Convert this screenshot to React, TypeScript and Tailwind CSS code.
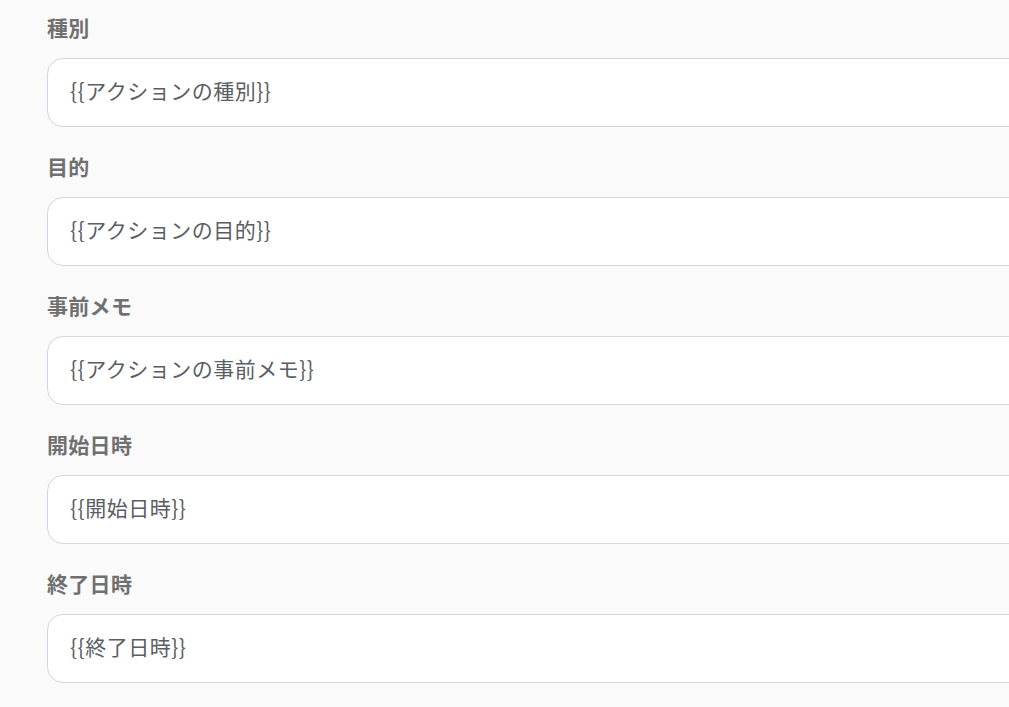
import React from "react";

const fields = [
  { label: "種別", value: "{{アクションの種別}}" },
  { label: "目的", value: "{{アクションの目的}}" },
  { label: "事前メモ", value: "{{アクションの事前メモ}}" },
  { label: "開始日時", value: "{{開始日時}}" },
  { label: "終了日時", value: "{{終了日時}}" },
];

export default function App() {
  return (
    <div
      className="h-[707px] w-full overflow-hidden bg-[#fafafa]"
      style={{ fontFamily: '"Noto Sans CJK JP", "Noto Sans", sans-serif' }}
    >
      <div className="flex flex-col gap-[25px] pl-[47px] pt-[13px]">
        {fields.map((f) => (
          <div key={f.label} className="flex flex-col gap-[17px]">
            <div className="h-[28px] text-[21px] font-bold leading-[28px] tracking-[0.3px] text-[#707070]">
              {f.label}
            </div>
            <div className="flex h-[69px] w-[1100px] items-center rounded-[16px] border border-[#d3d6de] bg-white pb-[3px] pl-[22px] text-[21px] tracking-[0.5px] text-[#5a5e64]">
              {f.value}
            </div>
          </div>
        ))}
      </div>
    </div>
  );
}
